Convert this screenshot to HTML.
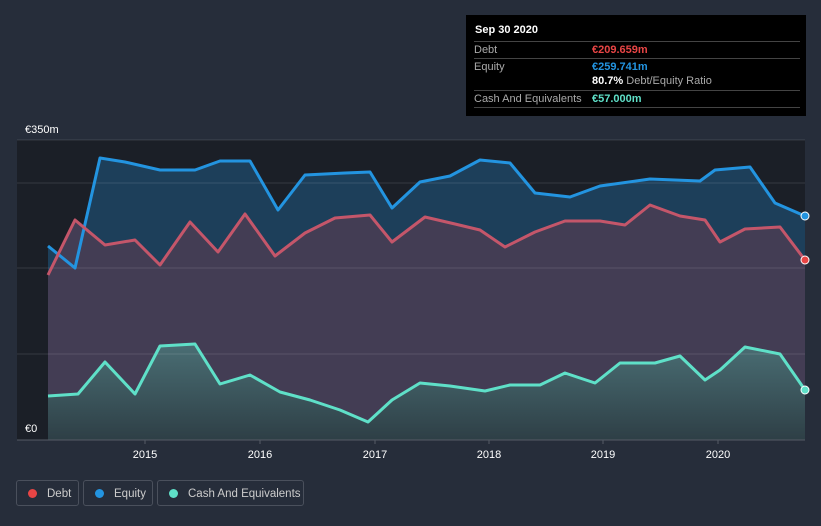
<!DOCTYPE html><html><head><style>
html,body{margin:0;width:821px;height:526px;overflow:hidden}
body{background:#262d3a;font-family:"Liberation Sans",sans-serif;position:relative}
.tt{position:absolute;left:466px;top:15px;width:340px;height:101px;background:#000;color:#fff;font-size:11px}
.tt .r{position:absolute;left:8px;right:6px;border-top:1px solid #444;height:16px}
.lab{color:#aaa;position:absolute;left:0;top:2px}
.val{position:absolute;left:118px;top:2px;font-weight:bold}
.leg{position:absolute;top:480px;height:26px;border:1px solid #4a505c;border-radius:3px;color:#ccc;font-size:11.5px;line-height:26px;box-sizing:border-box;white-space:nowrap}
.leg i{display:inline-block;width:9px;height:9px;border-radius:50%;margin:0 10px 0 11px;vertical-align:-1px}
</style></head><body>
<svg width="821" height="526" style="position:absolute;left:0;top:0">
<defs><linearGradient id="g" x1="0" y1="0" x2="0" y2="1"><stop offset="0" stop-color="#4a6e74"/><stop offset="1" stop-color="#2e3f46"/></linearGradient></defs>
<rect x="17" y="140" width="788" height="300" fill="#1b1f27"/>
<polygon fill="#1d3f5a" points="48,246 75,268 100,158 125,162 160,170 195,170 220,161 250,161 278,210 305,175 345,173 370,172 392,208 420,182 450,176 480,160 510,163 535,193 570,197 600,186 650,179 700,181 715,170 750,167 775,203 805,216 805,440 48,440"/>
<polygon fill="#433d54" points="48,275 75,220 105,245 135,240 160,265 190,222 218,252 245,214 275,256 305,233 335,218 370,215 392,242 425,217 455,224 480,230 505,247 535,232 565,221 600,221 625,225 650,205 680,216 705,220 720,242 745,229 780,227 805,260 805,440 48,440"/>
<polygon fill="url(#g)" points="48,396 78,394 105,362 135,394 160,346 195,344 220,384 250,375 280,392 310,400 340,410 368,422 392,400 420,383 450,386 485,391 510,385 540,385 565,373 595,383 620,363 655,363 680,356 705,380 720,370 745,347 780,354 805,390 805,440 48,440"/>
<g stroke="#ffffff" stroke-opacity="0.12"><line x1="17" y1="140" x2="805" y2="140"/><line x1="17" y1="183" x2="805" y2="183"/><line x1="17" y1="268" x2="805" y2="268"/><line x1="17" y1="354" x2="805" y2="354"/></g>
<line x1="17" y1="440" x2="805" y2="440" stroke="#555b66"/>
<g fill="none" stroke-width="3" stroke-linejoin="round">
<polyline stroke="#2394e0" points="48,246 75,268 100,158 125,162 160,170 195,170 220,161 250,161 278,210 305,175 345,173 370,172 392,208 420,182 450,176 480,160 510,163 535,193 570,197 600,186 650,179 700,181 715,170 750,167 775,203 805,216"/>
<polyline stroke="#c4566a" points="48,275 75,220 105,245 135,240 160,265 190,222 218,252 245,214 275,256 305,233 335,218 370,215 392,242 425,217 455,224 480,230 505,247 535,232 565,221 600,221 625,225 650,205 680,216 705,220 720,242 745,229 780,227 805,260"/>
<polyline stroke="#5fe0c8" points="48,396 78,394 105,362 135,394 160,346 195,344 220,384 250,375 280,392 310,400 340,410 368,422 392,400 420,383 450,386 485,391 510,385 540,385 565,373 595,383 620,363 655,363 680,356 705,380 720,370 745,347 780,354 805,390"/>
</g>
<circle cx="805" cy="216" r="4" fill="#2394e0" stroke="#fff"/><circle cx="805" cy="260" r="4" fill="#e84545" stroke="#fff"/><circle cx="805" cy="390" r="4" fill="#5fe0c8" stroke="#fff"/>
<g stroke="#555b66"><line x1="145" y1="440" x2="145" y2="444"/><line x1="260" y1="440" x2="260" y2="444"/><line x1="375" y1="440" x2="375" y2="444"/><line x1="489" y1="440" x2="489" y2="444"/><line x1="603" y1="440" x2="603" y2="444"/><line x1="718" y1="440" x2="718" y2="444"/></g>
<g fill="#fff" font-size="11" text-anchor="middle" font-family="Liberation Sans"><text x="145" y="458">2015</text><text x="260" y="458">2016</text><text x="375" y="458">2017</text><text x="489" y="458">2018</text><text x="603" y="458">2019</text><text x="718" y="458">2020</text></g>
<text x="25" y="133" fill="#fff" font-size="11" font-family="Liberation Sans">€350m</text>
<text x="25" y="432" fill="#fff" font-size="11" font-family="Liberation Sans">€0</text>
</svg>
<div class="tt">
<div style="position:absolute;left:9px;top:9px;font-weight:bold">Sep 30 2020</div>
<div class="r" style="top:26px"><span class="lab">Debt</span><span class="val" style="color:#e84545">€209.659m</span></div>
<div class="r" style="top:43px"><span class="lab">Equity</span><span class="val" style="color:#2394e0">€259.741m</span></div>
<div style="position:absolute;left:126px;top:60px"><b>80.7%</b> <span style="color:#aaa">Debt/Equity Ratio</span></div>
<div class="r" style="top:75px"><span class="lab">Cash And Equivalents</span><span class="val" style="color:#5fe0c8">€57.000m</span></div>
<div class="r" style="top:92px;height:0"></div>
</div>
<div class="leg" style="left:16px;width:63px"><i style="background:#e84545"></i>Debt</div>
<div class="leg" style="left:83px;width:70px"><i style="background:#2394e0"></i>Equity</div>
<div class="leg" style="left:157px;width:147px"><i style="background:#5fe0c8"></i>Cash And Equivalents</div>
</body></html>
